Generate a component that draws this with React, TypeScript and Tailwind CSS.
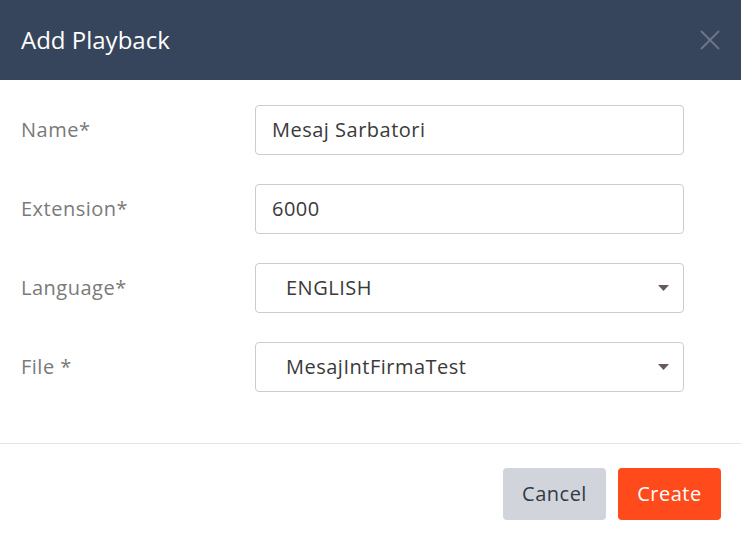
import { ReactNode } from "react";

const Caret = () => (
    <svg width="11" height="6" viewBox="0 0 11 6" className="absolute right-[14px] top-1/2 -translate-y-1/2">
        <path d="M0 0 L11 0 L5.5 6 Z" fill="#655a58" />
    </svg>
);

const Row = ({ label, children }: { label: string, children: ReactNode }) => (
    <div className="flex items-center">
        <label className="w-[234px] text-[20px] tracking-[0.5px] text-[#7a7a7a]">{label}</label>
        {children}
    </div>
);

const App = () => {
    const box = "relative w-[429px] h-[50px] border border-[#cccccc] rounded-[4px] flex items-center text-[20px] tracking-[0.5px] text-[#3a3a3a] bg-white";

    return (
        <div className="w-[741px] h-[542px] bg-white" style={{ fontFamily: '"Open Sans", sans-serif' }}>
            <div className="h-[80px] bg-[#36455b] flex items-center justify-between pl-[21px] pr-[20px]">
                <h1 className="text-[24px] text-white">Add Playback</h1>
                <svg width="22" height="22" viewBox="0 0 22 22">
                    <path d="M2 2 L20 20 M20 2 L2 20" stroke="#6c7686" strokeWidth="2" />
                </svg>
            </div>
            <div className="pt-[25px] pl-[21px] flex flex-col gap-[29px] pb-[51px] border-b border-[#e4e4e7]">
                <Row label="Name*">
                    <div className={`${box} pl-[16px]`}>Mesaj Sarbatori</div>
                </Row>
                <Row label="Extension*">
                    <div className={`${box} pl-[16px]`}>6000</div>
                </Row>
                <Row label="Language*">
                    <div className={`${box} pl-[30px]`}>ENGLISH<Caret /></div>
                </Row>
                <Row label="File *">
                    <div className={`${box} pl-[30px]`}>MesajIntFirmaTest<Caret /></div>
                </Row>
            </div>
            <div className="flex justify-end gap-[12px] pt-[24px] pr-[20px]">
                <button className="w-[103px] h-[52px] rounded-[4px] bg-[#d1d5db] text-[#333a45] text-[20px] tracking-[0.5px]">Cancel</button>
                <button className="w-[103px] h-[52px] rounded-[4px] bg-[#ff4a1c] text-white text-[20px] tracking-[0.5px]">Create</button>
            </div>
        </div>
    );
};

export default App;
